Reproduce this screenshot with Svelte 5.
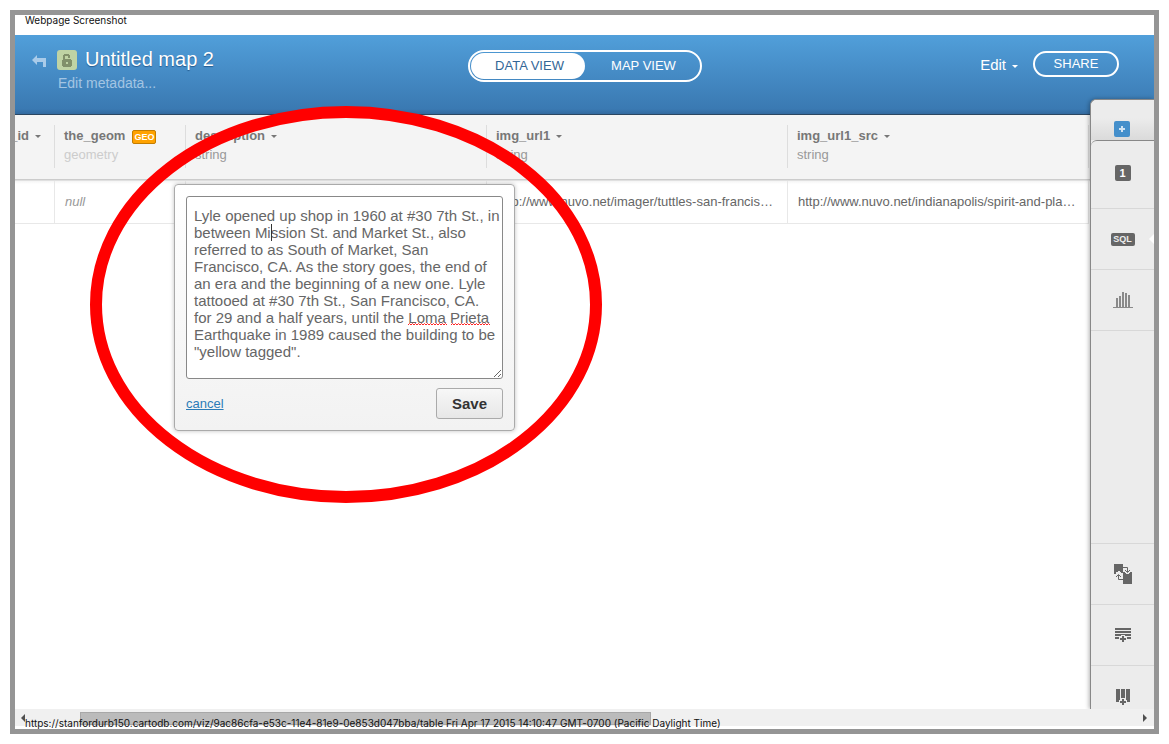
<script>
  const columns = [
    { name: 'img_url1', type: 'string', value: 'http://www.nuvo.net/imager/tuttles-san-francis…' },
    { name: 'img_url1_src', type: 'string', value: 'http://www.nuvo.net/indianapolis/spirit-and-pla…' }
  ];
  let view = $state('data');
  let description = $state(
    [
      'Lyle opened up shop in 1960 at #30 7th St., in',
      'between Mission St. and Market St., also',
      'referred to as South of Market, San',
      'Francisco, CA. As the story goes, the end of',
      'an era and the beginning of a new one. Lyle',
      'tattooed at #30 7th St., San Francisco, CA.',
      'for 29 and a half years, until the Loma Prieta',
      'Earthquake in 1989 caused the building to be',
      '"yellow tagged".'
    ].join('\n')
  );
</script>

{#snippet heading(name, type)}
  <button class="col-name">{name}<i class="caret"></i></button>
  {#if type}<span class="col-type">{type}</span>{/if}
{/snippet}

<div class="frame">
  <p class="caption">Webpage Screenshot</p>

  <div class="app">
    <header>
      <div class="title-block">
        <a class="back" href="#back" aria-label="Back">
          <svg width="15" height="13" viewBox="0 0 15 13"><path d="M0 5 5 0v3h9v9h-3V7H5v3z" fill="#a9cbe9" /></svg>
        </a>
        <div>
          <div class="title-row">
            <span class="lock">
              <svg width="10" height="13" viewBox="0 0 10 13">
                <path d="M1 5V1h1V0h5v1h1v3H6V2H3v3h6v1h1v6H9v1H1v-1H0V6h1zM4 8v2h2V8z" fill="#81906a" fill-rule="evenodd" />
              </svg>
            </span>
            <h1>Untitled map 2</h1>
          </div>
          <a class="meta" href="#metadata">Edit metadata...</a>
        </div>
      </div>
      <nav class="switch">
        <button class:active={view === 'data'} onclick={() => (view = 'data')}>DATA VIEW</button>
        <button class:active={view === 'map'} onclick={() => (view = 'map')}>MAP VIEW</button>
      </nav>
      <div class="actions">
        <button class="edit">Edit<i class="caret"></i></button>
        <button class="share">SHARE</button>
      </div>
    </header>

    <main>
      <div class="grid">
        <table>
          <colgroup><col class="c-id" /><col class="c-geom" /><col /><col /><col /></colgroup>
          <thead>
            <tr>
              <th class="id"><div>{@render heading('_id', '')}</div></th>
              <th>
                <div>
                  <span class="col-name">the_geom<b class="geo">GEO</b></span>
                  <span class="col-type faint">geometry</span>
                </div>
              </th>
              <th><div>{@render heading('description', 'string')}</div></th>
              {#each columns as c}
                <th><div>{@render heading(c.name, c.type)}</div></th>
              {/each}
            </tr>
          </thead>
          <tbody>
            <tr>
              <td></td>
              <td class="null">null</td>
              <td></td>
              {#each columns as c}<td>{c.value}</td>{/each}
            </tr>
          </tbody>
        </table>
      </div>

      <aside>
        <div class="add-layer"><button class="badge blue" aria-label="Add layer">
          <svg width="6" height="6" viewBox="0 0 6 6"><path d="M2 0h2v2h2v2H4v2H2V4H0V2h2z" fill="#cfe2f2" /></svg>
        </button></div>
        <div class="tools">
          <button class="tool first"><span class="badge">1</span></button>
          <button class="tool sql"><span>SQL</span></button>
          <button class="tool" aria-label="Filters">
            <svg width="20" height="16" viewBox="0 0 20 16"><path d="M0 15h20v1H0zM3 6h2v9H3zM6 4h2v11H6zM9 0h2v15H9zM12 1h2v14h-2zM15 3h2v12h-2z" fill="#8a8a8a" /></svg>
          </button>
          <div class="spacer"></div>
          <button class="tool" aria-label="Merge tables">
            <svg width="18" height="20" viewBox="0 0 18 20">
              <path d="M0 0h9v9H7V8H6V7H4v1H2v2H0zM9 8h2v1h1v1h3V9h1V8h2v12H9z" fill="#666" />
              <path d="M9 3.500h4.500V8M11 6l2.500 2.500L16 6M9 15.500H4.500V11M2 13l2.500-2.500L7 13" fill="none" stroke="#666" />
            </svg>
          </button>
          <button class="tool" aria-label="Add row">
            <svg width="16" height="14" viewBox="0 0 16 14"><path d="M0 0h16v2H0zM0 3h16v2H0zM0 6h16v2H0zM0 9h4v2H0zM12 9h4v2h-4z" fill="#666" /><path d="M6 7h4v2h2v4H4V9h2z" fill="#ececec" /><path d="M7 8h2v2h2v2H9v2H7v-2H5v-2h2z" fill="#666" /></svg>
          </button>
          <button class="tool last" aria-label="Add column">
            <svg width="14" height="16" viewBox="0 0 14 16"><path d="M0 0h4v13H0zM5 0h4v9H5zM10 0h4v13h-4z" fill="#666" /><path d="M6 9h2v2h3v4H3v-4h3z" fill="#ececec" /><path d="M6 10h2v2h2v2H8v2H6v-2H4v-2h2z" fill="#666" /></svg>
          </button>
        </div>
      </aside>

      <form class="popup" onsubmit={(e) => e.preventDefault()}>
        <div class="field">
          <textarea aria-label="description" bind:value={description} spellcheck="false"></textarea>
          <span class="text-cursor"></span>
          <svg class="squiggle" width="84" height="3" viewBox="0 0 84 3" fill="none" stroke="#f22">
            <path d="M0 2{'l1.500-1.500 1.500 1.500'.repeat(13)}M43 2{'l1.500-1.500 1.500 1.500'.repeat(13)}" />
          </svg>
        </div>
        <div class="buttons">
          <a href="#cancel">cancel</a>
          <button>Save</button>
        </div>
      </form>
    </main>

    <div class="scrollbar">
      <svg width="4" height="8" viewBox="0 0 4 8"><path d="M4 0v8L0 4z" fill="#505050" /></svg>
      <div class="track"><div class="thumb"></div></div>
      <svg width="4" height="8" viewBox="0 0 4 8"><path d="M0 0v8l4-4z" fill="#505050" /></svg>
    </div>
  </div>

  <p class="stamp">https://stanfordurb150.cartodb.com/viz/9ac86cfa-e53c-11e4-81e9-0e853d047bba/table Fri Apr 17 2015 14:10:47 GMT-0700 (Pacific Daylight Time)</p>

  <svg class="ring" width="512" height="398" viewBox="0 0 512 398"><ellipse cx="256" cy="198.500" rx="250" ry="192.500" fill="none" stroke="red" stroke-width="12" /></svg>
</div>

<style>
  :global(body) { background: #fff; }
  .frame, .frame * { box-sizing: border-box; }
  .frame {
    position: relative;
    display: flex;
    flex-direction: column;
    min-height: calc(100vh - 20px);
    margin: 10px;
    border: 5px solid #959595;
    font: 13px/16px "Liberation Sans", Arial, sans-serif;
    color: #666;
    overflow: hidden;
  }
  :global(#app) { display: flow-root; }
  button { font: inherit; color: inherit; background: none; border: 0; padding: 0; cursor: pointer; }
  p { margin: 0; font: 10px/10px Inter, "Liberation Sans", sans-serif; color: #111; }
  .caption { height: 20px; padding-left: 10px; }
  .app { flex: 1; display: flex; flex-direction: column; margin-bottom: 3px; }

  header {
    display: grid;
    grid-template-columns: 1fr 234px 1fr;
    height: 80px;
    padding: 15px 17px 0;
    background: linear-gradient(#519fda, #3a79b2 74px, #336a9f);
    border-bottom: 1px solid #2b4660;
    color: #fff;
  }
  .title-block { display: flex; gap: 10px; }
  .back { padding-top: 5px; width: 15px; }
  .back svg { display: block; }
  .title-row { display: flex; align-items: center; gap: 8px; height: 20px; }
  .lock {
    display: grid;
    place-items: center;
    width: 20px;
    height: 20px;
    border-radius: 3px;
    background: #bfd3a4;
  }
  h1 { margin: 0; font-size: 20px; line-height: 20px; padding-bottom: 2px; font-weight: 400; text-shadow: 0 1px 1px #245c90; }
  .meta { display: block; margin: 4px 0 0 1px; font-size: 14px; line-height: 18px; color: #a3c5e3; text-decoration: none; }
  .switch {
    display: flex;
    height: 32px;
    padding: 1px;
    border: 2px solid #fff;
    border-radius: 16px;
  }
  .switch button { flex: 1; padding-left: 4px; border-radius: 14px; color: #fff; }
  .switch .active { background: #fff; color: #336696; }
  .actions { display: flex; justify-content: flex-end; align-items: flex-start; gap: 15px; padding: 1px 18px 0 0; }
  .caret {
    display: inline-block;
    margin-left: 6px;
    border: 3px solid transparent;
    border-top-color: currentColor;
    border-bottom: 0;
    vertical-align: 2px;
  }
  .edit { font-size: 15px; line-height: 28px; }
  .share { width: 86px; height: 26px; border: 2px solid #fff; border-radius: 13px; }

  main { position: relative; flex: 1; display: flex; }
  .grid {
    flex: 1;
    min-width: 0;
    overflow: hidden;
    background: linear-gradient(#f4f4f4 64px, #ccc 64px, #ccc 65px, #f4f4f4 66px, #fff 69px);
  }
  table { width: 1074px; table-layout: fixed; border-collapse: separate; border-spacing: 0; }
  .c-id { width: 40px; }
  .c-geom { width: 131px; }
  th { height: 66px; padding: 10px 0 12px; text-align: left; font-weight: 400; vertical-align: top; }
  th > div { height: 43px; padding: 3px 9px 0; border-right: 1px solid #ddd; white-space: nowrap; }
  th.id > div { display: flex; justify-content: flex-end; padding: 3px 13px 0 0; }
  .col-name { display: block; height: 16px; font-weight: 700; color: #777; }
  .col-type { display: block; margin-top: 3px; color: #999; }
  .col-type.faint { color: #ccc; }
  .geo {
    display: inline-block;
    margin-left: 7px;
    padding: 0 1px;
    border: 1px solid #c47d00;
    border-radius: 2px;
    background: #ffa200;
    color: #fff;
    font-size: 9px;
    line-height: 12px;
  }
  td {
    height: 43px;
    padding: 0 10px;
    border-right: 1px solid #e8e8e8;
    border-bottom: 1px solid #e8e8e8;
    white-space: nowrap;
  }
  .null { font-style: italic; color: #999; }

  aside {
    display: flex;
    flex-direction: column;
    width: 64px;
    margin-top: -16px;
    border: 1px solid #888;
    border-width: 1px 0 0 1px;
    border-radius: 6px 0 0 0;
    background: #ececec;
    box-shadow: -1px 0 4px rgba(0, 0, 0, 0.3);
  }
  .add-layer {
    height: 40px;
    padding: 21px 0 0 23px;
    border-radius: 6px 0 0 0;
    background: linear-gradient(#ececec 18px, #dadada);
  }
  .badge {
    display: grid;
    place-items: center;
    width: 16px;
    height: 16px;
    border-radius: 2px;
    background: #666;
    color: #fff;
    font-size: 11px;
    font-weight: 700;
    line-height: 16px;
  }
  .badge.blue { background: #448fcb; }
  .tools { flex: 1; display: flex; flex-direction: column; border-top: 1px solid #888; border-radius: 6px 0 0 0; background: #ececec; }
  .tool { position: relative; display: grid; place-items: center; height: 61px; border-bottom: 1px solid #d8d8d8; }
  .tool.first { height: 68px; padding-bottom: 3px; }
  .tool.last { height: 43px; border-bottom: 0; padding-top: 18px; }
  .spacer { flex: 1; border-bottom: 1px solid #d8d8d8; }
  .sql { overflow: hidden; }
  .sql span { width: 24px; height: 13px; border-radius: 2px; background: #666; color: #eee; font-size: 9px; line-height: 13px; font-weight: 700; }
  .sql::after {
    content: "";
    position: absolute;
    right: 0;
    border: 5px solid transparent;
    border-right-color: #fff;
    border-left: 0;
  }

  .popup {
    position: absolute;
    z-index: 2;
    left: 159px;
    top: 69px;
    width: 341px;
    padding: 11px;
    border: 1px solid #aaa;
    border-radius: 4px;
    background: linear-gradient(#fff, #f2f2f2);
    box-shadow: 0 0 4px rgba(0, 0, 0, 0.25);
  }
  .field { position: relative; }
  textarea {
    display: block;
    width: 100%;
    height: 183px;
    padding: 10px 0 10px 7px;
    border: 1px solid #888;
    border-radius: 3px;
    background: #fff;
    color: #666;
    font: 15px/17px "Liberation Sans", Arial, sans-serif;
    outline: 0;
    overflow: hidden;
  }
  .text-cursor { position: absolute; left: 85px; top: 28px; width: 1px; height: 17px; background: #333; }
  .squiggle { position: absolute; left: 222px; top: 127px; }
  .buttons { display: flex; justify-content: space-between; align-items: center; margin-top: 9px; }
  .buttons a { color: #2b7cb8; }
  .buttons button {
    width: 67px;
    height: 31px;
    border: 1px solid #aaa;
    border-radius: 3px;
    background: linear-gradient(#f7f7f7, #e7e7e7);
    color: #333;
    font-size: 15px;
    font-weight: 700;
  }

  .scrollbar {
    position: relative;
    display: flex;
    align-items: center;
    justify-content: space-between;
    height: 17px;
    padding: 0 7px 0 6px;
    background: #f0f0f0;
  }
  .track { flex: 1; padding: 2px 0 0 55px; }
  .thumb { width: 571px; max-width: 100%; height: 13px; background: #bbb; border: 1px solid #a8a8a8; }
  .stamp { position: absolute; left: 10px; bottom: 1px; }
  .ring { position: absolute; z-index: 3; left: 75px; top: 91px; pointer-events: none; }
</style>
